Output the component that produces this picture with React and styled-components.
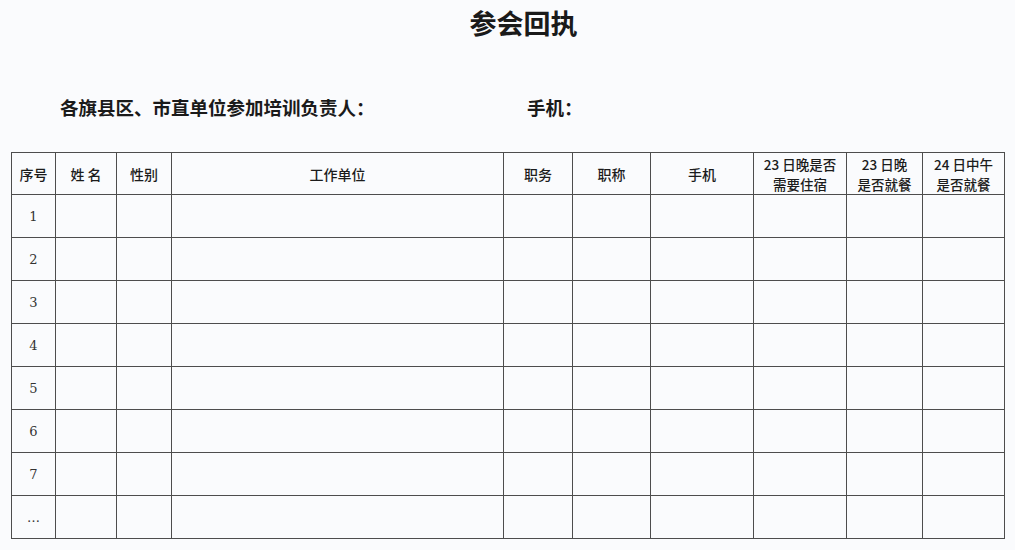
import styled, { createGlobalStyle } from 'styled-components';

const GlobalStyle = createGlobalStyle`
  html, body {
    margin: 0;
    padding: 0;
    background: #fafbfd;
  }
  body {
    font-family: 'Noto Sans CJK SC', 'Noto Sans', sans-serif;
    color: #1a1a1a;
  }
`;

const columns = [
  { label: '序号', width: 44 },
  { label: '姓 名', width: 61 },
  { label: '性别', width: 55 },
  { label: '工作单位', width: 332 },
  { label: '职务', width: 69 },
  { label: '职称', width: 78 },
  { label: '手机', width: 103 },
  { label: ['23 日晚是否', '需要住宿'], width: 93 },
  { label: ['23 日晚', '是否就餐'], width: 76 },
  { label: ['24 日中午', '是否就餐'], width: 82 },
];

const rows = ['1', '2', '3', '4', '5', '6', '7', '…'];

const App = () => {
  return (
    <Page>
      <GlobalStyle />
      <Title>参会回执</Title>
      <InfoLine>
        <InfoLabel $width={467}>各旗县区、市直单位参加培训负责人：</InfoLabel>
        <InfoLabel>手机：</InfoLabel>
      </InfoLine>
      <Table>
        <colgroup>
          {columns.map((col, i) => (
            <col key={i} style={{ width: col.width }} />
          ))}
        </colgroup>
        <thead>
          <tr>
            {columns.map((col, i) => (
              <HeadCell key={i}>
                {Array.isArray(col.label)
                  ? col.label.map((line, j) => <HeadLine key={j}>{line}</HeadLine>)
                  : col.label}
              </HeadCell>
            ))}
          </tr>
        </thead>
        <tbody>
          {rows.map((num) => (
            <Row key={num}>
              <NumCell>{num}</NumCell>
              {columns.slice(1).map((_, i) => (
                <Cell key={i} />
              ))}
            </Row>
          ))}
        </tbody>
      </Table>
    </Page>
  );
};

const Page = styled.div`
  width: 1015px;
  height: 550px;
  overflow: hidden;
  padding-top: 8px;
  box-sizing: border-box;
`;

const Title = styled.h1`
  margin: 0;
  text-align: center;
  font-size: 27px;
  line-height: 30px;
  font-weight: 600;
  padding-left: 32px;
`;

const InfoLine = styled.div`
  display: flex;
  align-items: center;
  margin-top: 57px;
  padding-left: 60px;
  height: 24px;
`;

const InfoLabel = styled.span`
  width: ${(p) => (p.$width ? `${p.$width}px` : 'auto')};
  font-size: 18.5px;
  font-weight: 600;
  line-height: 24px;
`;

const Table = styled.table`
  margin: 33px 0 0 11px;
  width: 993px;
  border-collapse: collapse;
  table-layout: fixed;
`;

const HeadCell = styled.th`
  height: 41px;
  padding: 0;
  border: 1px solid #4d4d4d;
  font-size: 14px;
  font-weight: 500;
  line-height: 20px;
  text-align: center;
  vertical-align: middle;
  color: #1c1c1c;
`;

const HeadLine = styled.div`
  white-space: nowrap;
  font-size: 13.5px;
  line-height: 20px;
`;

const Row = styled.tr`
  height: 43px;
`;

const Cell = styled.td`
  padding: 0;
  border: 1px solid #4d4d4d;
`;

const NumCell = styled(Cell)`
  text-align: center;
  font-family: 'DejaVu Serif', 'Liberation Serif', serif;
  font-size: 13px;
  color: #333;
`;

export default App;
